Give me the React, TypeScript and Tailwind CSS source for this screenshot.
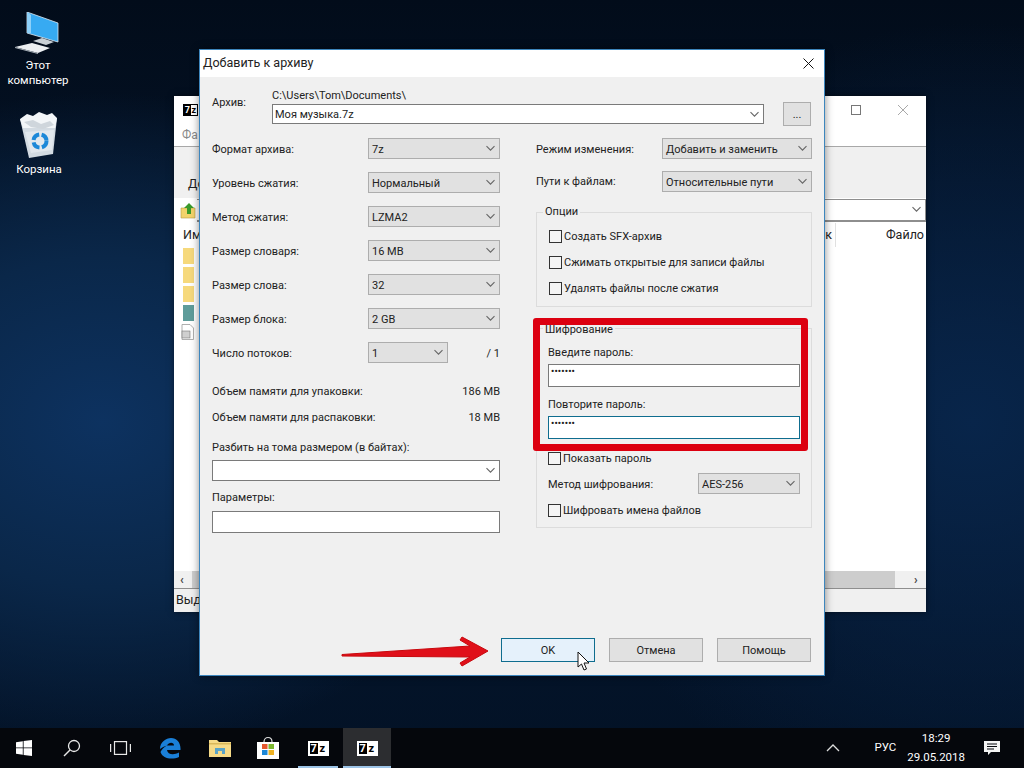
import React from "react";

function Chevron({ className = "" }: { className?: string }) {
  return (
    <svg width="11" height="7" viewBox="0 0 11 7" className={className}>
      <path d="M1.5 1.2 L5.5 5.2 L9.5 1.2" fill="none" stroke="#666" strokeWidth="1.1" />
    </svg>
  );
}

function Combo({ text, w, white }: { text?: string; w: string; white?: boolean }) {
  return (
    <div className={`${w} h-[21px] flex items-center justify-between pl-[3px] pr-[3px] border ${white ? "bg-white border-[#7a7a7a]" : "bg-[#e1e1e1] border-[#adadad]"}`}>
      <span className="pt-[2px]">{text}</span>
      <Chevron />
    </div>
  );
}

function LRow({ label, value }: { label: string; value: string }) {
  return (
    <div className="flex items-center justify-between h-[21px]">
      <span className="pt-[2px]">{label}</span>
      <Combo text={value} w="w-[132px]" />
    </div>
  );
}

function Check({ label, cls = "" }: { label: string; cls?: string }) {
  return (
    <div className={`flex items-center gap-[2px] h-[16px] ${cls}`}>
      <span className="w-[13px] h-[13px] bg-[#f4f4f4] border border-[#333]" />
      <span>{label}</span>
    </div>
  );
}

function Btn({ text, ok }: { text: string; ok?: boolean }) {
  return (
    <div className={`w-[94px] h-[24px] flex items-center justify-center border ${ok ? "bg-[#e5f1fb] border-[#0f6d8f]" : "bg-[#e1e1e1] border-[#adadad]"}`}>
      {text}
    </div>
  );
}

function Logo7z({ small }: { small?: boolean }) {
  return (
    <div className={`${small ? "w-[15px] h-[12px] text-[9px] border border-black" : "w-[21px] h-[15px] text-[11px] border-2 border-white"} bg-white flex items-stretch font-bold leading-none`}>
      <span className="w-1/2 bg-black text-white flex items-center justify-center">7</span>
      <span className="w-1/2 bg-white text-black flex items-center justify-center">z</span>
    </div>
  );
}

function Folder({ color = "#f6d97c" }: { color?: string }) {
  return <div className="w-[11px] h-[16px] mb-[3px] shrink-0" style={{ background: color }} />;
}

export default function App() {
  return (
    <div className="relative w-[1024px] h-[768px] overflow-hidden font-['Roboto',sans-serif] text-[11px] leading-none text-[#222] bg-[radial-gradient(ellipse_420px_330px_at_10%_55%,#0d3260_0%,#0a2749_50%,transparent_100%),radial-gradient(ellipse_420px_400px_at_95%_55%,#08254a_0%,transparent_100%),linear-gradient(180deg,#020c1a_0%,#05172f_50%,#031226_100%)]">
      {/* desktop icons */}
      <div className="absolute left-[2px] top-[12px] w-[72px] flex flex-col items-center text-white text-center text-[11.5px] leading-[15px]">
        <svg width="46" height="44" viewBox="0 0 46 44" className="ml-[-1px]">
          <path d="M12 0 L43 11 V30 L12 21Z" fill="#37aaf2" stroke="#dfeaf4" strokeWidth=".8" />
          <path d="M12 0 L16 3 V21 L12 21Z" fill="#8ed0f8" />
          <path d="M18 29 L27 26 L39 30 L31 33 Z" fill="#c9d0d6" />
          <path d="M0 35 L17 31 L35 36 L23 41 Z" fill="#eceff2" />
          <path d="M0 35 L23 41 V42 L0 36Z" fill="#a9b1b9" />
        </svg>
        <span className="mt-[2px]">Этот<br />компьютер</span>
      </div>
      <div className="absolute left-[3px] top-[112px] w-[72px] flex flex-col items-center text-white text-[11.5px]">
        <svg width="40" height="46" viewBox="0 0 40 46">
          <path d="M1 7 L38 6 L34 42 L10 46 Z" fill="#d3dbe2" />
          <path d="M1 7 L8 2 L14 4 L20 0 L28 3 L33 1 L38 6 L36 16 L4 16Z" fill="#f3f6f8" />
          <path d="M5 10 L14 8 L22 12 L31 9 L35 13 L24 17 L12 15Z" fill="#cfd6dc" />
          <path d="M6 20 L35 18 L33 38 L12 41Z" fill="#e2e8ed" />
          <circle cx="21" cy="29" r="6.5" fill="none" stroke="#1c88d8" strokeWidth="4" strokeDasharray="8 2.5" />
        </svg>
        <span className="mt-[6px]">Корзина</span>
      </div>

      {/* background 7-Zip window */}
      <div className="absolute left-[174px] top-[96px] w-[752px] h-[516px] bg-white flex flex-col shadow-[0_0_6px_rgba(0,0,0,.5)]">
        <div className="h-[28px] flex items-center justify-between pl-[9px] pr-[17px] shrink-0">
          <Logo7z small />
          <div className="flex items-center gap-[36px]">
            <span className="w-[10px] h-[10px] border border-[#777]" />
            <svg width="12" height="12" viewBox="0 0 12 12"><path d="M1 1 L11 11 M11 1 L1 11" stroke="#a9a9a9" strokeWidth="1" /></svg>
          </div>
        </div>
        <div className="h-[23px] flex items-center pl-[8px] text-[#8a8a8a] shrink-0 border-b border-[#a8a8a8] text-[12px]">Фа</div>
        <div className="h-[51px] flex items-end pl-[14px] pb-[8px] bg-[#f0f0f0] shrink-0 text-[12.5px]">До</div>
        <div className="h-[24px] flex items-center pl-[6px] shrink-0 gap-[1px]">
          <svg width="16" height="17" viewBox="0 0 16 17"><path d="M1 6 H15 V16 H1Z" fill="#f3d36b" stroke="#b99a3f" strokeWidth=".6" /><path d="M9 1 L14 6 H11 V12 H7 V6 H4Z" fill="#3a9a2a" /></svg>
          <div className="flex-1 h-[23px] border-t border-l-0 border-b-2 border-r border-[#8e8e8e] flex items-center justify-end pr-[3px]"><Chevron /></div>
        </div>
        <div className="h-[26px] flex items-center pl-[9px] text-[12.5px] shrink-0">
          <span>Им</span>
          <span className="ml-auto">к</span>
          <span className="w-px h-[24px] bg-[#e0e0e0] ml-[3px]" />
          <span className="w-[90px] text-right pr-[2px]">Файло</span>
        </div>
        <div className="flex-1 pl-[9px] flex flex-col">
          <Folder />
          <Folder />
          <Folder />
          <Folder color="#5e9c9a" />
          <svg width="13" height="16" viewBox="0 0 13 16" className="shrink-0 -ml-[2px]">
            <path d="M1 .5 H9 L12.5 4 V15.5 H1Z" fill="#fff" stroke="#9a9a9a" strokeWidth=".8" />
            <rect x="1" y="7" width="8" height="7" fill="#cfcfcf" stroke="#777" strokeWidth=".6" />
          </svg>
        </div>
        <div className="h-[17px] bg-[#f0f0f0] flex items-center pl-[6px] pr-[6px] shrink-0 border-b border-[#8e8e8e] box-content text-[12px]">
          <span className="font-bold text-[#444] w-[6px]">‹</span>
          <span className="flex-1 h-[17px] ml-[6px] mr-[19px] bg-[#cdcdcd]" />
          <span className="font-bold text-[#444] w-[6px]">›</span>
        </div>
        <div className="h-[23px] bg-[#f0f0f0] flex items-center pl-[2px] text-[12.5px] shrink-0">Выд</div>
      </div>

      {/* dialog */}
      <div className="absolute left-[199px] top-[49px] w-[626px] h-[627px] bg-[#f0f0f0] border border-[#3d86bd] flex flex-col shadow-[0_0_8px_rgba(0,0,0,.45)]">
        <div className="h-[27px] bg-white flex items-center justify-between pl-[3px] pr-[10px] text-[12.5px] shrink-0">
          <span>Добавить к архиву</span>
          <svg width="11" height="11" viewBox="0 0 11 11"><path d="M.5 .5 L10.5 10.5 M10.5 .5 L.5 10.5" stroke="#111" strokeWidth="1" /></svg>
        </div>
        <div className="flex-1 pl-[12px] pr-[12px]">
          <div className="flex items-start pt-[10px] h-[47px]">
            <span className="w-[60px] mt-[10px]">Архив:</span>
            <div className="w-[492px]">
              <div className="h-[17px] flex items-center">C:\Users\Tom\Documents\</div>
              <div className="h-[20px] bg-white border border-[#7a7a7a] flex items-center justify-between pl-[2px] pr-[3px]">
                <span>Моя музыка.7z</span>
                <Chevron />
              </div>
            </div>
            <div className="w-[28px] h-[24px] ml-[19px] mt-[15px] bg-[#e1e1e1] border border-[#adadad] flex items-center justify-center">...</div>
          </div>
          <div className="flex justify-between mt-[14px]">
            {/* left column */}
            <div className="w-[288px]">
              <div className="flex flex-col gap-[13px]">
                <LRow label="Формат архива:" value="7z" />
                <LRow label="Уровень сжатия:" value="Нормальный" />
                <LRow label="Метод сжатия:" value="LZMA2" />
                <LRow label="Размер словаря:" value="16 MB" />
                <LRow label="Размер слова:" value="32" />
                <LRow label="Размер блока:" value="2 GB" />
                <div className="flex items-center h-[21px]">
                  <span className="w-[156px] pt-[2px]">Число потоков:</span>
                  <Combo text="1" w="w-[80px]" />
                  <span className="ml-auto pt-[2px]">/ 1</span>
                </div>
              </div>
              <div className="flex justify-between h-[16px] items-center mt-[20px]"><span>Объем памяти для упаковки:</span><span>186 MB</span></div>
              <div className="flex justify-between h-[16px] items-center mt-[10px]"><span>Объем памяти для распаковки:</span><span>18 MB</span></div>
              <div className="h-[16px] flex items-center mt-[14px]">Разбить на тома размером (в байтах):</div>
              <div className="mt-[5px]"><Combo w="w-[288px]" white /></div>
              <div className="h-[16px] flex items-center mt-[8px]">Параметры:</div>
              <div className="mt-[6px] h-[22px] bg-white border border-[#7a7a7a]" />
            </div>
            {/* right column */}
            <div className="w-[276px]">
              <div className="flex items-center justify-between h-[21px]"><span className="pt-[2px]">Режим изменения:</span><Combo text="Добавить и заменить" w="w-[150px]" /></div>
              <div className="flex items-center justify-between h-[21px] mt-[12px]"><span>Пути к файлам:</span><Combo text="Относительные пути" w="w-[150px]" /></div>
              <div className="relative mt-[20px] h-[95px] border border-[#dcdcdc] pl-[12px] pt-[15px]">
                <span className="absolute left-[6px] top-[-7px] px-[2px] bg-[#f0f0f0]">Опции</span>
                <Check label="Создать SFX-архив" />
                <Check label="Сжимать открытые для записи файлы" cls="mt-[10px]" />
                <Check label="Удалять файлы после сжатия" cls="mt-[10px]" />
              </div>
              <div className="relative mt-[21px] h-[200px] border border-[#dcdcdc] pl-[11px] pr-[11px] pt-[15px]">
                <span className="absolute left-[6px] top-[-5px] px-[2px] bg-[#f0f0f0]">Шифрование</span>
                <div className="h-[16px] flex items-center">Введите пароль:</div>
                <div className="mt-[4px] h-[23px] bg-white border border-[#7a7a7a] pl-[2px] pt-[2px] text-[9px] font-bold tracking-[0.2px]">•••••••</div>
                <div className="h-[16px] flex items-center mt-[9px]">Повторите пароль:</div>
                <div className="mt-[4px] h-[23px] bg-white border border-[#0f6d8f] pl-[2px] pt-[2px] text-[9px] font-bold tracking-[0.2px]">•••••••</div>
                <Check label="Показать пароль" cls="mt-[11px]" />
                <div className="flex items-center justify-between mt-[7px]"><span className="pt-[2px]">Метод шифрования:</span><Combo text="AES-256" w="w-[102px]" /></div>
                <Check label="Шифровать имена файлов" cls="mt-[8px]" />
              </div>
            </div>
          </div>
        </div>
        <div className="flex justify-end gap-[14px] pr-[13px] pb-[13px] shrink-0">
          <Btn text="OK" ok />
          <Btn text="Отмена" />
          <Btn text="Помощь" />
        </div>
      </div>

      {/* annotation overlays */}
      <div className="absolute left-[533px] top-[318px] w-[275px] h-[133px] border-[7px] border-[#dc0010] rounded-[3px]" />
      <svg className="absolute left-[340px] top-[630px]" width="160" height="40" viewBox="0 0 160 40">
        <path d="M2 24.5 L130 16 L120 10 L122 7 L148 21 L122 36 L120 33 L130 27 L2 26Z" fill="#e0101a" stroke="#c8080d" strokeWidth="1" strokeLinejoin="round" />
      </svg>
      <svg className="absolute left-[577px] top-[651px]" width="14" height="21" viewBox="0 0 14 21">
        <path d="M1 1 V16 L4.5 13 L7 19 L9.5 18 L7 12 H12Z" fill="#fff" stroke="#111" strokeWidth="1" />
      </svg>

      {/* taskbar */}
      <div className="absolute left-0 right-0 bottom-0 h-[40px] bg-[#05070c] flex items-center text-white text-[11.5px]">
        <div className="w-[48px] h-full flex items-center justify-center">
          <svg width="16" height="16" viewBox="0 0 16 16"><path d="M0 2.2 L6.8 1.2 V7.5 H0Z M7.6 1.1 L16 0 V7.5 H7.6Z M0 8.3 H6.8 V14.8 L0 13.8Z M7.6 8.3 H16 V16 L7.6 14.9Z" fill="#fff" /></svg>
        </div>
        <div className="w-[48px] h-full flex items-center justify-center">
          <svg width="18" height="18" viewBox="0 0 18 18"><circle cx="11" cy="7" r="5.5" fill="none" stroke="#e8e8e8" strokeWidth="1.3" /><path d="M7 11 L1 17" stroke="#e8e8e8" strokeWidth="1.5" /></svg>
        </div>
        <div className="w-[48px] h-full flex items-center justify-center">
          <svg width="21" height="14" viewBox="0 0 21 14" fill="none" stroke="#e8e8e8" strokeWidth="1.2"><rect x="4.5" y=".6" width="12" height="12.8" /><path d="M.6 3 V11 M20.4 3 V11" /></svg>
        </div>
        <div className="w-[52px] h-full flex items-center justify-center">
          <svg width="22" height="21" viewBox="0 0 22 21"><path d="M1 11 C1 4 7 0 12 0 C18 0 22 5 21.5 12 H8 C8.5 16.5 14.5 17.5 20 14.5 V19 C13.5 22 3.5 21 1.5 14 C3 11 5 9 8 7.5 H15 C15 4 10 3.5 8 7.5 C5 8.5 3 9.5 1 11Z" fill="#1a7fd8" fillRule="evenodd" /></svg>
        </div>
        <div className="w-[48px] h-full flex items-center justify-center">
          <svg width="22" height="18" viewBox="0 0 22 18"><path d="M0 1 H8 L10 3 H22 V18 H0Z" fill="#f6da87" /><path d="M6 9 H16 V15 H13 V12 H9 V15 H6Z" fill="#5aa3c7" /><rect x="0" y="4" width="22" height="1.5" fill="#d9b75a" /></svg>
        </div>
        <div className="w-[48px] h-full flex items-center justify-center">
          <svg width="24" height="24" viewBox="0 0 24 24"><path d="M1 6 H23 V23 H1Z" fill="#fff" /><path d="M8 6 C8 0 16 0 16 6" fill="none" stroke="#ddd" strokeWidth="1.2" /><rect x="6" y="8" width="5.5" height="5" fill="#e4572e" /><rect x="12.5" y="8" width="5.5" height="5" fill="#7cb82f" /><rect x="6" y="14" width="5.5" height="5" fill="#1e88d8" /><rect x="12.5" y="14" width="5.5" height="5" fill="#f0b323" /></svg>
        </div>
        <div className="w-[48px] h-full flex items-center justify-center relative ml-[2px]">
          <Logo7z />
          <span className="absolute left-[4px] right-[4px] bottom-0 h-[2px] bg-[#9cc3e6]" />
        </div>
        <div className="w-[48px] h-full flex items-center justify-center relative bg-[#2c2d30] ml-[1px]">
          <Logo7z />
          <span className="absolute left-0 right-0 bottom-0 h-[2px] bg-[#9cc3e6]" />
        </div>
        <div className="ml-auto flex items-center h-full">
          <svg width="14" height="8" viewBox="0 0 14 8" className="mr-[34px]"><path d="M1 7 L7 1 L13 7" fill="none" stroke="#ddd" strokeWidth="1.3" /></svg>
          <span className="mr-[11px]">РУС</span>
          <div className="flex flex-col items-center gap-[8px] mr-[18px]"><span>18:29</span><span>29.05.2018</span></div>
          <svg width="18" height="17" viewBox="0 0 18 17" className="mr-[23px]"><path d="M1 1 H17 V12 H8 L5 15 V12 H1Z" fill="#f4f4f4" /><path d="M4 4 H14 M4 6.5 H14 M4 9 H11" stroke="#05070c" strokeWidth="1" /></svg>
        </div>
      </div>
    </div>
  );
}
